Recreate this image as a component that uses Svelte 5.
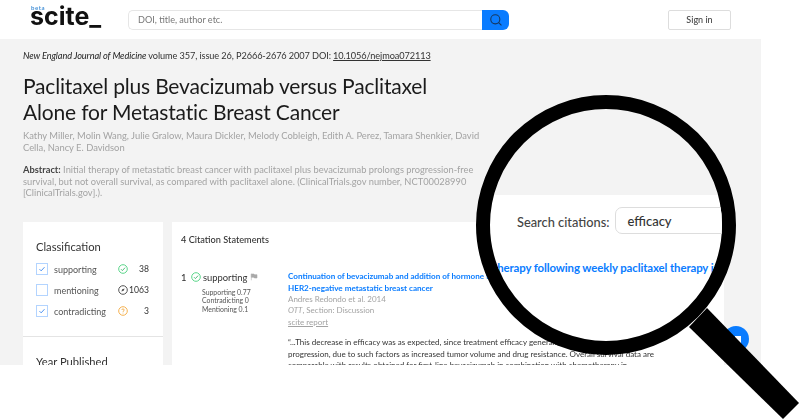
<script>
  const filters = [
    { label: 'supporting', checked: true, count: 38, kind: 'ok' },
    { label: 'mentioning', checked: false, count: 1063, kind: 'mention' },
    { label: 'contradicting', checked: true, count: 3, kind: 'warn' }
  ];
</script>

{#snippet statusIcon(kind)}
  <svg class="status" viewBox="0 0 20 20" width="10" height="10" aria-hidden="true">
    {#if kind === 'ok'}
      <circle cx="10" cy="10" r="8.6" fill="none" stroke="#5bd68a" stroke-width="2" />
      <path d="M6 10.4l2.8 2.8 5.4-6" fill="none" stroke="#3fb56c" stroke-width="1.8" />
    {:else if kind === 'mention'}
      <circle cx="10" cy="10" r="8.6" fill="none" stroke="#555" stroke-width="2" />
      <path d="M6.8 13.2l1.6-4.6 4.8-1.8-1.8 4.8z" fill="#555" />
    {:else}
      <circle cx="10" cy="10" r="8.6" fill="none" stroke="#f5b251" stroke-width="2" />
      <path d="M7.6 8c0-3 4.8-3 4.8 0 0 1.8-2.4 1.8-2.4 3.8M10 13.4v1.4" fill="none" stroke="#f0a63c" stroke-width="1.7" />
    {/if}
  </svg>
{/snippet}

<div class="window">
  <header>
    <div class="logo"><span class="beta">beta</span><span class="word">scite_</span></div>
    <form class="search">
      <span class="field">DOI, title, author etc.</span>
      <span class="go">
        <svg viewBox="0 0 20 20" width="14" height="14" aria-hidden="true">
          <circle cx="9" cy="9" r="6.5" fill="none" stroke="#17375e" stroke-width="1.5" />
          <path d="M13.8 13.8l4 4" stroke="#17375e" stroke-width="1.5" />
        </svg>
      </span>
    </form>
    <span class="signin">Sign in</span>
  </header>

  <main>
    <section class="paper">
      <p class="meta"><em>New England Journal of Medicine</em> volume 357, issue 26, P2666-2676 2007 DOI: <u>10.1056/nejmoa072113</u></p>
      <h1>Paclitaxel plus Bevacizumab versus Paclitaxel Alone for Metastatic Breast Cancer</h1>
      <p class="authors">Kathy Miller, Molin Wang, Julie Gralow, Maura Dickler, Melody Cobleigh, Edith A. Perez, Tamara Shenkier, David Cella, Nancy E. Davidson</p>
      <p class="abstract"><b>Abstract:</b> Initial therapy of metastatic breast cancer with paclitaxel plus bevacizumab prolongs progression-free survival, but not overall survival, as compared with paclitaxel alone. (ClinicalTrials.gov number, NCT00028990 [ClinicalTrials.gov].).</p>
    </section>

    <div class="columns">
      <aside>
        <div class="block">
          <h2>Classification</h2>
          {#each filters as f}
            <div class="filter">
              <span class="box">
                {#if f.checked}
                  <svg viewBox="0 0 12 12" width="10" height="10" aria-hidden="true"><path d="M3 6.2l2 2 4-4.4" fill="none" stroke="#2f80ed" stroke-width="1" /></svg>
                {/if}
              </span>
              <span class="name">{f.label}</span>
              {@render statusIcon(f.kind)}
              <span class="count">{f.count}</span>
            </div>
          {/each}
        </div>
        <div class="block year"><h2>Year Published</h2></div>
      </aside>

      <section class="citations">
        <h3>4 Citation Statements</h3>
        <div class="statement">
          <div class="rank">
            <div class="rank-top">
              <span class="num">1</span>
              {@render statusIcon('ok')}
              <span class="kind">supporting</span>
              <svg class="flag" viewBox="0 0 12 12" width="8" height="8" aria-hidden="true"><path d="M2 1v10M2 1.5h4l1 1h3.5v5H6.5l-1-1H2z" fill="#a9a9a9" stroke="#a9a9a9" stroke-width=".8" /></svg>
            </div>
            <ul>
              <li>Supporting 0.77</li>
              <li>Contradicting 0</li>
              <li>Mentioning 0.1</li>
            </ul>
          </div>
          <div class="body">
            <div class="cite-title">Continuation of bevacizumab and addition of hormone therapy following weekly paclitaxel therapy in<br />HER2-negative metastatic breast cancer</div>
            <div class="cite-sub">Andres Redondo et al. 2014</div>
            <div class="cite-sub"><em>OTT</em>, Section: Discussion</div>
            <div class="cite-sub"><u>scite report</u></div>
            <p class="quote">“...This decrease in efficacy was as expected, since treatment efficacy generally declines with disease<br />progression, due to such factors as increased tumor volume and drug resistance. Overall survival data are<br />comparable with results obtained for first-line bevacizumab in combination with chemotherapy in</p>
          </div>
        </div>
      </section>
    </div>

    <span class="fab"><span class="fab-glyph"></span></span>
  </main>

  <div class="magnifier">
    <svg class="handle" viewBox="0 0 120 120" width="120" height="120" aria-hidden="true">
      <path d="M19 1L111 96 95 112 1 20z" fill="#000" />
    </svg>
    <div class="lens">
      <div class="lens-search">
        <span class="lens-label">Search citations:</span>
        <span class="lens-input">efficacy</span>
      </div>
      <div class="lens-title">therapy following weekly paclitaxel therapy in HER2</div>
    </div>
  </div>
</div>

<style>
  :global(body) {
    margin: 0;
    background: #fff;
  }

  .window {
    position: relative;
    width: 800px;
    height: 420px;
    overflow: hidden;
    background: #fff;
    font-family: Lato, "Open Sans", sans-serif;
    color: #333;
  }

  header {
    display: flex;
    align-items: center;
    height: 39px;
    padding: 0 69px 0 30px;
    box-sizing: border-box;
    filter: blur(0.3px);
  }

  .logo {
    position: relative;
    width: 98px;
    height: 29px;
  }

  .beta {
    position: absolute;
    left: 1px;
    top: 0;
    font-size: 6px;
    line-height: 6px;
    font-weight: 700;
    letter-spacing: 0.6px;
    color: #4a94d8;
  }

  .word {
    position: absolute;
    left: 0;
    top: -4px;
    font-family: Inter, sans-serif;
    font-size: 25px;
    line-height: 30px;
    font-weight: 700;
    color: #111;
  }

  .search {
    display: flex;
    width: 381px;
    height: 20px;
    margin: 0;
  }

  .field {
    flex: 1;
    padding-left: 9px;
    border: 1px solid #e6e6e6;
    border-right: 0;
    border-radius: 5px 0 0 5px;
    font-size: 9.1px;
    line-height: 18px;
    color: #777;
  }

  .go {
    display: flex;
    align-items: center;
    justify-content: center;
    width: 27px;
    background: #0a7cff;
    border-radius: 0 6px 6px 0;
  }

  .signin {
    margin-left: auto;
    width: 63px;
    height: 20px;
    box-sizing: border-box;
    border: 1px solid #ddd;
    border-radius: 2px;
    text-align: center;
    font-size: 9px;
    font-weight: 500;
    line-height: 18px;
    color: #444;
  }

  main {
    position: relative;
    width: 761px;
    height: 326px;
    overflow: hidden;
    background: #f3f3f3;
    padding: 10px 37px 0 23px;
    box-sizing: border-box;
    filter: blur(0.3px);
  }

  .paper {
    width: 458px;
  }

  .meta {
    margin: 0;
    font-size: 9.2px;
    letter-spacing: -0.1px;
    line-height: 13px;
    color: #333;
  }

  .meta em {
    color: #222;
  }

  h1 {
    margin: 11px 0 0;
    font-size: 21px;
    line-height: 26px;
    font-weight: 400;
    letter-spacing: -0.18px;
    color: #1b1b1b;
  }

  .authors {
    margin: 5px 0 0;
    font-size: 9.4px;
    line-height: 11.5px;
    color: #a3a3a3;
  }

  .abstract {
    margin: 11px 0 0;
    font-size: 9.3px;
    line-height: 11.5px;
    color: #a3a3a3;
  }

  .abstract b {
    color: #444;
  }

  .columns {
    display: flex;
    gap: 9px;
    margin-top: 23px;
    align-items: flex-start;
  }

  aside {
    width: 140px;
    flex: none;
    background: #fff;
  }

  .block {
    padding: 17px 14px 14px 13px;
    border-bottom: 1px solid #e4e4e4;
  }

  .block.year {
    border-bottom: 0;
  }

  h2 {
    margin: 0 0 5px;
    font-size: 11.2px;
    line-height: 15px;
    font-weight: 400;
    color: #333;
  }

  .filter {
    display: flex;
    align-items: center;
    height: 21px;
    font-size: 9px;
    color: #555;
  }

  .box {
    display: flex;
    align-items: center;
    justify-content: center;
    width: 12px;
    height: 12px;
    box-sizing: border-box;
    margin-right: 6px;
    border: 1px solid #b3d4ff;
  }

  .name {
    flex: 1;
  }

  .count {
    width: 21px;
    text-align: right;
    color: #333;
    font-size: 8.6px;
  }

  .status {
    flex: none;
  }

  .citations {
    flex: 1;
    height: 220px;
    padding: 12px 9px;
    box-sizing: border-box;
    background: #fff;
  }

  h3 {
    margin: 0;
    font-size: 9.2px;
    line-height: 12px;
    font-weight: 500;
    color: #333;
  }

  .statement {
    display: flex;
    margin-top: 23px;
  }

  .rank {
    width: 107px;
    flex: none;
  }

  .rank-top {
    display: flex;
    align-items: center;
    gap: 2px;
    height: 11px;
    font-size: 9.4px;
    margin-top: 3px;
  }

  .num {
    width: 8px;
    font-weight: 500;
  }

  .flag {
    margin-left: 1px;
  }

  ul {
    margin: 5px 0 0 21px;
    padding: 0;
    list-style: none;
    font-size: 6.9px;
    line-height: 8.5px;
    color: #555;
  }

  .body {
    flex: none;
    margin-top: 1px;
    white-space: nowrap;
  }

  .cite-title {
    font-size: 8.1px;
    line-height: 12px;
    font-weight: 700;
    color: #0a7cff;
  }

  .cite-sub {
    font-size: 8px;
    line-height: 11.5px;
    color: #a3a3a3;
  }

  .quote {
    margin: 9px 0 0;
    font-size: 8px;
    line-height: 11.5px;
    color: #333;
  }

  .fab {
    position: absolute;
    left: 723px;
    top: 287px;
    width: 26px;
    height: 26px;
    border-radius: 50%;
    background: #0a7cff;
  }

  .fab-glyph {
    position: absolute;
    left: 12px;
    top: 10px;
    width: 6px;
    height: 7px;
    background: #fff;
  }

  .magnifier {
    position: absolute;
    left: 476px;
    top: 95px;
    width: 260px;
    height: 260px;
  }

  .handle {
    position: absolute;
    left: 212px;
    top: 212px;
  }

  .lens {
    position: relative;
    width: 260px;
    height: 260px;
    box-sizing: border-box;
    border: 14px solid #000;
    border-radius: 50%;
    overflow: hidden;
    background: linear-gradient(#f3f3f3 86px, #fff 86px);
  }

  .lens-search {
    display: flex;
    align-items: center;
    height: 27px;
    margin: 98px 0 0 27px;
    white-space: nowrap;
  }

  .lens-label {
    padding-top: 2px;
    font-size: 12.8px;
    font-weight: 500;
    color: #444;
  }

  .lens-input {
    flex: none;
    width: 140px;
    height: 27px;
    box-sizing: border-box;
    margin-left: 6px;
    padding: 2px 0 0 11px;
    border: 1px solid #ddd;
    border-radius: 7px;
    font-size: 13px;
    font-weight: 500;
    line-height: 23px;
    color: #333;
    background: #fff;
  }

  .lens-title {
    margin: 25.5px 0 0 3px;
    font-size: 11.4px;
    line-height: 16px;
    font-weight: 700;
    letter-spacing: -0.1px;
    color: #0a7cff;
    white-space: nowrap;
  }
</style>
